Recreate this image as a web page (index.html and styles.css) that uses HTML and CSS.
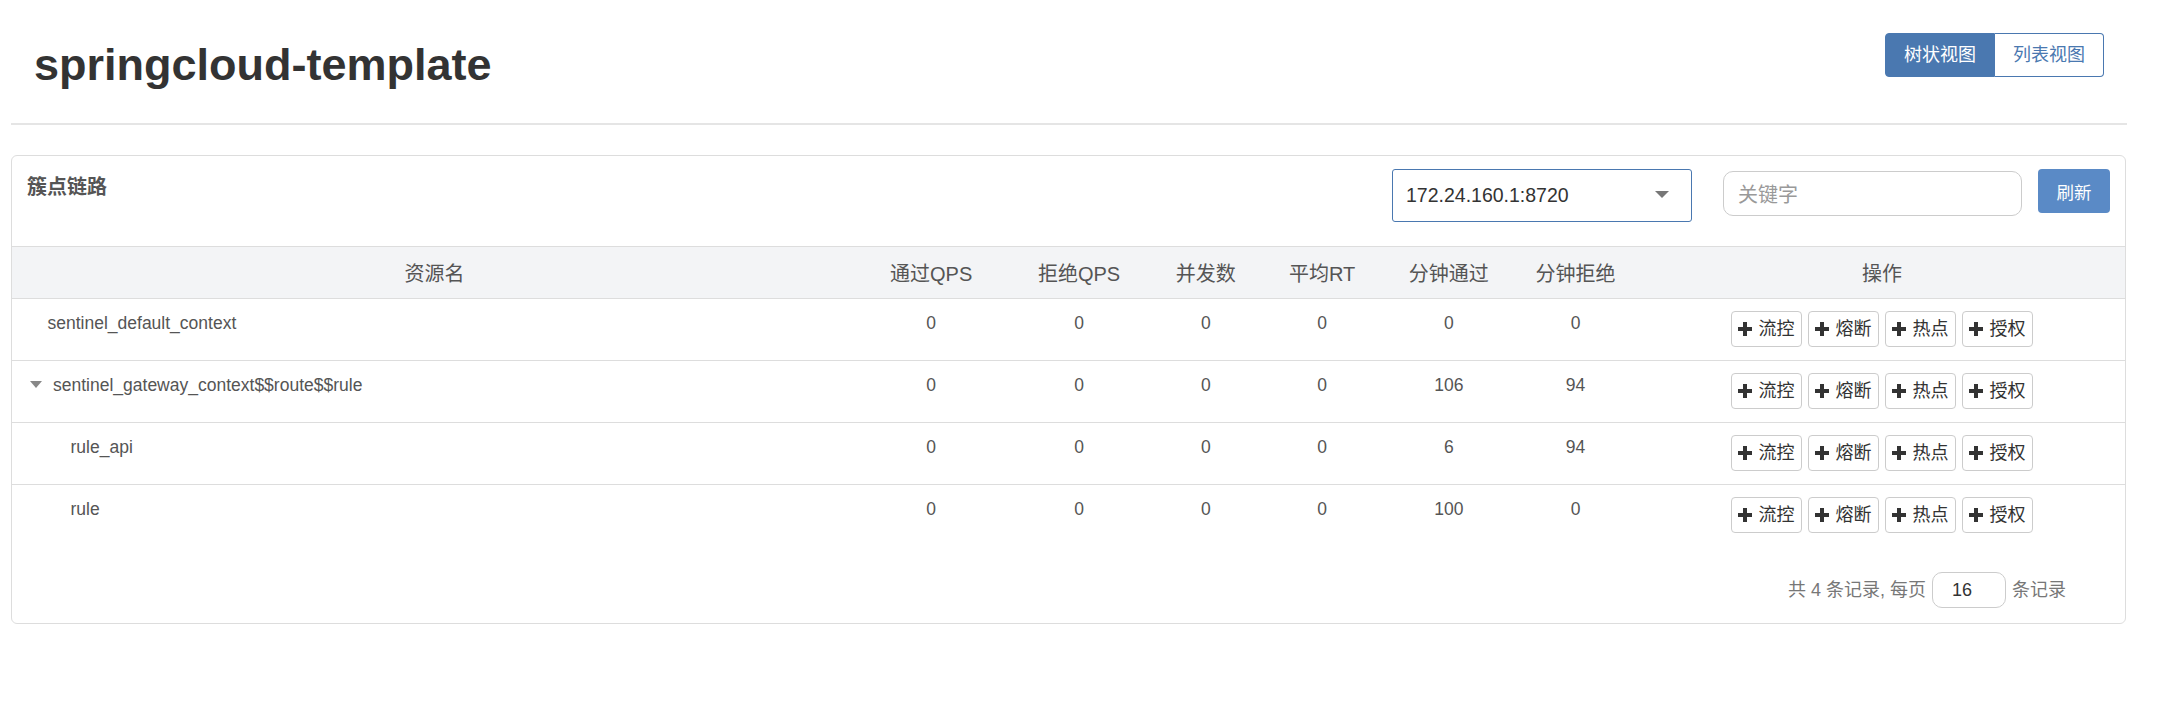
FILE: index.html
```html
<!DOCTYPE html>
<html lang="zh-CN">
<head>
<meta charset="utf-8">
<title>簇点链路</title>
<link rel="stylesheet" href="styles.css">
</head>
<body>
<div class="page">
  <header class="top">
    <h1 class="title">springcloud-template</h1>
    <div class="view-switch">
      <button class="vbtn active">树状视图</button>
      <button class="vbtn">列表视图</button>
    </div>
  </header>
  <hr class="rule">
  <section class="panel">
    <div class="panel-head">
      <span class="brand">簇点链路</span>
      <div class="tools">
        <div class="select"><span>172.24.160.1:8720</span><i class="caret"></i></div>
        <div class="search"><span class="ph">关键字</span></div>
        <button class="refresh">刷新</button>
      </div>
    </div>
    <table class="grid">
      <colgroup>
        <col class="c40"><col class="c7"><col class="c7"><col class="c5"><col class="c6"><col class="c6"><col class="c6"><col class="c23">
      </colgroup>
      <thead>
        <tr>
          <th>资源名</th><th>通过QPS</th><th>拒绝QPS</th><th>并发数</th><th>平均RT</th><th>分钟通过</th><th>分钟拒绝</th><th>操作</th>
        </tr>
      </thead>
      <tbody>
        <tr>
          <td class="name">sentinel_default_context</td>
          <td>0</td><td>0</td><td>0</td><td>0</td><td>0</td><td>0</td>
          <td><div class="acts">
            <span class="act"><svg class="plus" viewBox="0 0 14 14"><path d="M5 0h4v5h5v4H9v5H5V9H0V5h5z"/></svg>流控</span>
            <span class="act"><svg class="plus" viewBox="0 0 14 14"><path d="M5 0h4v5h5v4H9v5H5V9H0V5h5z"/></svg>熔断</span>
            <span class="act"><svg class="plus" viewBox="0 0 14 14"><path d="M5 0h4v5h5v4H9v5H5V9H0V5h5z"/></svg>热点</span>
            <span class="act"><svg class="plus" viewBox="0 0 14 14"><path d="M5 0h4v5h5v4H9v5H5V9H0V5h5z"/></svg>授权</span>
          </div></td>
        </tr>
        <tr>
          <td class="name parent"><i class="toggle"></i>sentinel_gateway_context$$route$$rule</td>
          <td>0</td><td>0</td><td>0</td><td>0</td><td>106</td><td>94</td>
          <td><div class="acts">
            <span class="act"><svg class="plus" viewBox="0 0 14 14"><path d="M5 0h4v5h5v4H9v5H5V9H0V5h5z"/></svg>流控</span>
            <span class="act"><svg class="plus" viewBox="0 0 14 14"><path d="M5 0h4v5h5v4H9v5H5V9H0V5h5z"/></svg>熔断</span>
            <span class="act"><svg class="plus" viewBox="0 0 14 14"><path d="M5 0h4v5h5v4H9v5H5V9H0V5h5z"/></svg>热点</span>
            <span class="act"><svg class="plus" viewBox="0 0 14 14"><path d="M5 0h4v5h5v4H9v5H5V9H0V5h5z"/></svg>授权</span>
          </div></td>
        </tr>
        <tr>
          <td class="name child">rule_api</td>
          <td>0</td><td>0</td><td>0</td><td>0</td><td>6</td><td>94</td>
          <td><div class="acts">
            <span class="act"><svg class="plus" viewBox="0 0 14 14"><path d="M5 0h4v5h5v4H9v5H5V9H0V5h5z"/></svg>流控</span>
            <span class="act"><svg class="plus" viewBox="0 0 14 14"><path d="M5 0h4v5h5v4H9v5H5V9H0V5h5z"/></svg>熔断</span>
            <span class="act"><svg class="plus" viewBox="0 0 14 14"><path d="M5 0h4v5h5v4H9v5H5V9H0V5h5z"/></svg>热点</span>
            <span class="act"><svg class="plus" viewBox="0 0 14 14"><path d="M5 0h4v5h5v4H9v5H5V9H0V5h5z"/></svg>授权</span>
          </div></td>
        </tr>
        <tr>
          <td class="name child">rule</td>
          <td>0</td><td>0</td><td>0</td><td>0</td><td>100</td><td>0</td>
          <td><div class="acts">
            <span class="act"><svg class="plus" viewBox="0 0 14 14"><path d="M5 0h4v5h5v4H9v5H5V9H0V5h5z"/></svg>流控</span>
            <span class="act"><svg class="plus" viewBox="0 0 14 14"><path d="M5 0h4v5h5v4H9v5H5V9H0V5h5z"/></svg>熔断</span>
            <span class="act"><svg class="plus" viewBox="0 0 14 14"><path d="M5 0h4v5h5v4H9v5H5V9H0V5h5z"/></svg>热点</span>
            <span class="act"><svg class="plus" viewBox="0 0 14 14"><path d="M5 0h4v5h5v4H9v5H5V9H0V5h5z"/></svg>授权</span>
          </div></td>
        </tr>
      </tbody>
    </table>
    <div class="pager">
      <span>共 4 条记录, 每页</span>
      <span class="size">16</span>
      <span>条记录</span>
    </div>
  </section>
</div>
</body>
</html>
```
FILE: styles.css
```css
* { box-sizing: border-box; }

body {
  margin: 0;
  background: #fff;
  color: #555;
  font-family: "Liberation Sans", "Noto Sans CJK SC", sans-serif;
}

.page {
  margin-left: 11px;
  width: 2115px;
}

.top {
  display: flex;
  justify-content: space-between;
  align-items: flex-start;
  height: 123px;
}

.title {
  margin: 40px 0 0 23px;
  font-size: 45px;
  line-height: 49.5px;
  font-weight: bold;
  color: #333;
}

.view-switch {
  display: flex;
  margin: 33px 22px 0 0;
}

.vbtn {
  height: 44px;
  padding: 0 18px;
  border: 1px solid #4a78b0;
  background: #fff;
  color: #4a78b0;
  font-family: "Liberation Sans", "Noto Sans CJK SC", sans-serif;
  font-size: 18px;
  line-height: 24px;
}

.vbtn.active {
  background: #4a78b0;
  color: #fff;
  border-radius: 4px 0 0 4px;
}

.vbtn + .vbtn {
  border-left: 0;
  border-radius: 0 4px 4px 0;
}

.rule {
  margin: 0;
  border: 0;
  height: 2px;
  width: 2116px;
  background: #e5e5e5;
}

.panel {
  margin-top: 30px;
  border: 1px solid #ddd;
  border-radius: 6px;
}

.panel-head {
  display: flex;
  justify-content: space-between;
  align-items: flex-start;
  height: 90px;
  padding: 0 15px;
}

.brand {
  margin-top: 19px;
  font-size: 20px;
  line-height: 24px;
  font-weight: bold;
  color: #555;
}

.tools {
  display: flex;
  align-items: flex-start;
  margin-top: 13px;
}

.select {
  position: relative;
  display: flex;
  align-items: center;
  width: 300px;
  height: 53px;
  padding-left: 13px;
  border: 1px solid #4a78b0;
  border-radius: 3px;
  font-size: 19.5px;
  color: #333;
}

.caret {
  position: absolute;
  right: 22px;
  top: 21px;
  width: 0;
  height: 0;
  border-left: 7px solid transparent;
  border-right: 7px solid transparent;
  border-top: 7px solid #777;
}

.search {
  display: flex;
  align-items: center;
  margin: 2px 0 0 31px;
  width: 299px;
  height: 45px;
  padding-left: 14px;
  border: 1px solid #ccc;
  border-radius: 10px;
  font-size: 20px;
}

.ph { color: #999; }

.refresh {
  margin-left: 16px;
  width: 72px;
  height: 44px;
  padding: 0;
  border: 0;
  border-radius: 4px;
  background: #5a8ac6;
  color: #fff;
  font-family: "Liberation Sans", "Noto Sans CJK SC", sans-serif;
  font-size: 17.5px;
}

.grid {
  width: 100%;
  border-collapse: collapse;
  table-layout: fixed;
}

.c40 { width: 40%; }
.c7 { width: 7%; }
.c5 { width: 5%; }
.c6 { width: 6%; }
.c23 { width: 23%; }

.grid th {
  height: 52px;
  padding: 0;
  border-top: 1px solid #ddd;
  border-bottom: 1px solid #ddd;
  background: #f3f4f6;
  font-weight: normal;
  font-size: 20px;
  color: #555;
  text-align: center;
  vertical-align: middle;
}

.grid td {
  padding: 12px 10px 13px;
  border-top: 1px solid #ddd;
  font-size: 17.5px;
  line-height: 25px;
  color: #555;
  text-align: center;
  vertical-align: top;
}

.grid tbody tr:first-child td { border-top: 0; }

.grid td.name { text-align: left; padding-left: 35.5px; }
.grid td.parent { padding-left: 18px; }
.grid td.child { padding-left: 58.5px; }

.toggle {
  display: inline-block;
  width: 0;
  height: 0;
  margin-right: 11px;
  vertical-align: 3px;
  border-left: 6px solid transparent;
  border-right: 6px solid transparent;
  border-top: 7px solid #888;
}

.acts {
  display: flex;
  justify-content: center;
  gap: 6px;
}

.act {
  display: inline-flex;
  align-items: center;
  gap: 6px;
  height: 36px;
  padding: 0 6.5px;
  border: 1px solid #ccc;
  border-radius: 4px;
  background: #fff;
  color: #333;
  font-size: 18px;
  line-height: 24px;
}

.plus {
  width: 14px;
  height: 14px;
  fill: #333;
}

.pager {
  display: flex;
  justify-content: flex-end;
  align-items: center;
  gap: 6px;
  padding: 26px 59px 15px 0;
  font-size: 18px;
  line-height: 24px;
  color: #777;
}

.size {
  display: flex;
  align-items: center;
  width: 74px;
  height: 36px;
  padding-left: 19px;
  border: 1px solid #ccc;
  border-radius: 10px;
  color: #333;
}
```
